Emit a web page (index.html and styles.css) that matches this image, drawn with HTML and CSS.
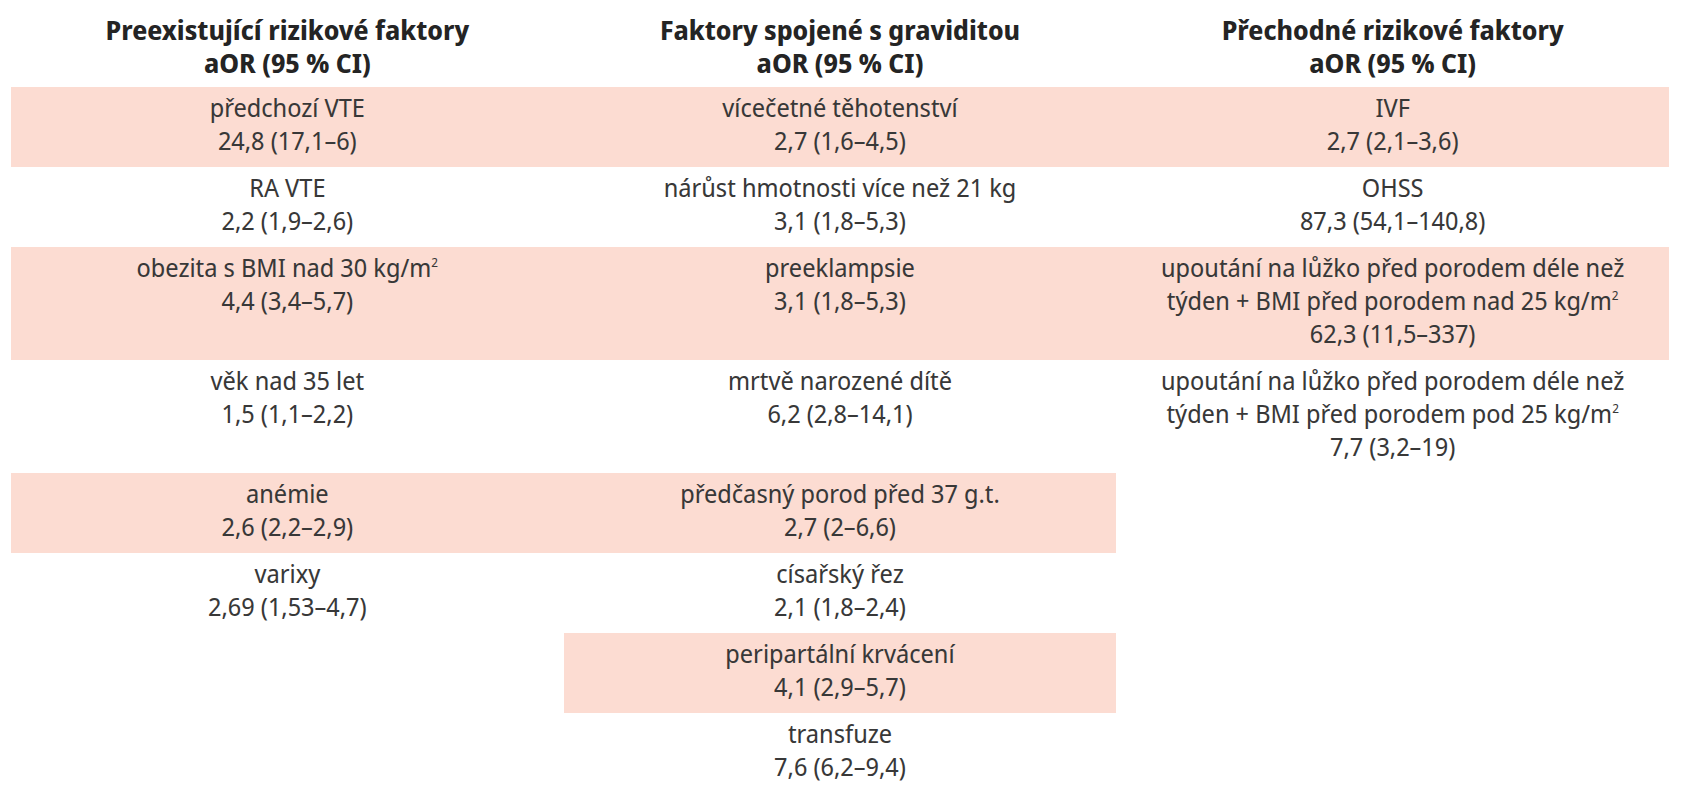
FILE: index.html
```html
<!DOCTYPE html>
<html lang="cs">
<head>
<meta charset="utf-8">
<title>Rizikové faktory VTE</title>
<link rel="stylesheet" href="styles.css">
</head>
<body>
<table class="risk">
  <colgroup><col class="c"><col class="c"><col class="c"></colgroup>
  <thead>
    <tr>
      <th>Preexistující rizikové faktory<br>aOR (95 % CI)</th>
      <th>Faktory spojené s graviditou<br>aOR (95 % CI)</th>
      <th>Přechodné rizikové faktory<br>aOR (95 % CI)</th>
    </tr>
  </thead>
  <tbody>
    <tr class="pink">
      <td>předchozí VTE<br>24,8 (17,1–6)</td>
      <td>vícečetné těhotenství<br>2,7 (1,6–4,5)</td>
      <td>IVF<br>2,7 (2,1–3,6)</td>
    </tr>
    <tr>
      <td>RA VTE<br>2,2 (1,9–2,6)</td>
      <td>nárůst hmotnosti více než 21 kg<br>3,1 (1,8–5,3)</td>
      <td>OHSS<br>87,3 (54,1–140,8)</td>
    </tr>
    <tr class="pink">
      <td>obezita s BMI nad 30 kg/m<sup>2</sup><br>4,4 (3,4–5,7)</td>
      <td>preeklampsie<br>3,1 (1,8–5,3)</td>
      <td>upoutání na lůžko před porodem déle než<br>týden + BMI před porodem nad 25 kg/m<sup>2</sup><br>62,3 (11,5–337)</td>
    </tr>
    <tr>
      <td>věk nad 35 let<br>1,5 (1,1–2,2)</td>
      <td>mrtvě narozené dítě<br>6,2 (2,8–14,1)</td>
      <td>upoutání na lůžko před porodem déle než<br>týden + BMI před porodem pod 25 kg/m<sup>2</sup><br>7,7 (3,2–19)</td>
    </tr>
    <tr class="pink">
      <td>anémie<br>2,6 (2,2–2,9)</td>
      <td>předčasný porod před 37 g.t.<br>2,7 (2–6,6)</td>
      <td class="empty"></td>
    </tr>
    <tr>
      <td>varixy<br>2,69 (1,53–4,7)</td>
      <td>císařský řez<br>2,1 (1,8–2,4)</td>
      <td class="empty"></td>
    </tr>
    <tr class="pink">
      <td class="empty"></td>
      <td>peripartální krvácení<br>4,1 (2,9–5,7)</td>
      <td class="empty"></td>
    </tr>
    <tr>
      <td class="empty"></td>
      <td>transfuze<br>7,6 (6,2–9,4)</td>
      <td class="empty"></td>
    </tr>
  </tbody>
</table>
</body>
</html>
```

FILE: styles.css
```css
html, body {
  margin: 0;
  padding: 0;
  background: #ffffff;
}

body {
  padding-left: 11px;
  font-family: "Noto Sans Display", "Open Sans", "Liberation Sans", sans-serif;
  color: #383838;
}

.risk {
  border-collapse: collapse;
  table-layout: fixed;
  width: 1658px;
}

.risk .c {
  width: 33.333%;
}

.risk th {
  font-weight: bold;
  font-size: 26.5px;
  line-height: 33px;
  color: #242424;
  text-align: center;
  padding: 14px 0 7px;
}

.risk td {
  font-size: 25px;
  line-height: 33px;
  text-align: center;
  vertical-align: top;
  padding: 4px 0 10px;
}

.risk tr.pink td {
  background: #fcdcd2;
}

.risk tr.pink td.empty {
  background: #ffffff;
}

.risk sup {
  font-size: 0.5em;
  line-height: 0;
  vertical-align: 0.8em;
}
```
